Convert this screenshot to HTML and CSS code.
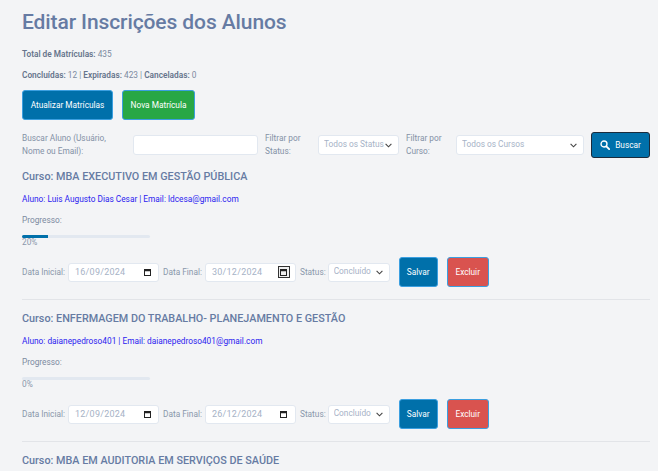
FILE: index.html
```html
<!DOCTYPE html>
<html lang="pt-BR">
<head>
<meta charset="utf-8">
<title>Editar Inscrições dos Alunos</title>
<link rel="stylesheet" href="styles.css">
</head>
<body>
<main class="page">
  <h1 class="title">Editar Inscrições dos Alunos</h1>
  <p class="stat"><strong>Total de Matrículas:</strong> 435</p>
  <p class="stat"><strong>Concluídas:</strong> 12 | <strong>Expiradas:</strong> 423 | <strong>Canceladas:</strong> 0</p>
  <div class="actions">
    <button class="btn btn-blue btn-update" type="button">Atualizar Matrículas</button>
    <button class="btn btn-green btn-new" type="button">Nova Matrícula</button>
  </div>
  <form class="filters">
    <label class="filter-label label-search">Buscar Aluno (Usuário, Nome ou Email):</label>
    <input class="field search" type="text">
    <label class="filter-label label-status">Filtrar por Status:</label>
    <select class="field select status-filter"><option>Todos os Status</option></select>
    <label class="filter-label label-course">Filtrar por Curso:</label>
    <select class="field select course-filter"><option>Todos os Cursos</option></select>
    <button class="btn btn-search" type="button">
      <svg class="search-icon" viewBox="0 0 12 12" width="10" height="10" aria-hidden="true"><circle cx="4.8" cy="4.8" r="3.6" fill="none" stroke="#fff" stroke-width="1.6"/><path d="M7.6 7.6 11 11" stroke="#fff" stroke-width="2.2" stroke-linecap="round"/></svg>
      Buscar
    </button>
  </form>

  <section class="enroll">
    <h2 class="course">Curso: MBA EXECUTIVO EM GESTÃO PÚBLICA</h2>
    <p class="student">Aluno: Luis Augusto Dias Cesar | Email: ldcesa@gmail.com</p>
    <p class="progress-label">Progresso:</p>
    <div class="bar"><div class="fill" style="width:20%"></div></div>
    <div class="pct">20%</div>
    <div class="row">
      <label class="row-label">Data Inicial:</label>
      <span class="field date"><input class="date-text" type="text" value="16/09/2024"><span class="cal"><svg viewBox="0 0 7 7" width="7" height="7" aria-hidden="true"><path d="M0 0H7V7H0ZM1 2.2V6H6V2.2Z" fill="#222" fill-rule="evenodd"/></svg></span></span>
      <label class="row-label">Data Final:</label>
      <span class="field date"><input class="date-text" type="text" value="30/12/2024"><span class="cal cal-hover"><svg viewBox="0 0 7 7" width="7" height="7" aria-hidden="true"><path d="M0 0H7V7H0ZM1 2.2V6H6V2.2Z" fill="#222" fill-rule="evenodd"/></svg></span></span>
      <label class="row-label">Status:</label>
      <select class="field select status"><option>Concluído</option></select>
      <button class="btn btn-blue btn-save" type="button">Salvar</button>
      <button class="btn btn-red" type="button">Excluir</button>
    </div>
  </section>

  <section class="enroll">
    <h2 class="course">Curso: ENFERMAGEM DO TRABALHO- PLANEJAMENTO E GESTÃO</h2>
    <p class="student">Aluno: daianepedroso401 | Email: daianepedroso401@gmail.com</p>
    <p class="progress-label">Progresso:</p>
    <div class="bar"><div class="fill" style="width:0%"></div></div>
    <div class="pct">0%</div>
    <div class="row">
      <label class="row-label">Data Inicial:</label>
      <span class="field date"><input class="date-text" type="text" value="12/09/2024"><span class="cal"><svg viewBox="0 0 7 7" width="7" height="7" aria-hidden="true"><path d="M0 0H7V7H0ZM1 2.2V6H6V2.2Z" fill="#222" fill-rule="evenodd"/></svg></span></span>
      <label class="row-label">Data Final:</label>
      <span class="field date"><input class="date-text" type="text" value="26/12/2024"><span class="cal"><svg viewBox="0 0 7 7" width="7" height="7" aria-hidden="true"><path d="M0 0H7V7H0ZM1 2.2V6H6V2.2Z" fill="#222" fill-rule="evenodd"/></svg></span></span>
      <label class="row-label">Status:</label>
      <select class="field select status"><option>Concluído</option></select>
      <button class="btn btn-blue btn-save" type="button">Salvar</button>
      <button class="btn btn-red" type="button">Excluir</button>
    </div>
  </section>

  <section class="enroll">
    <h2 class="course">Curso: MBA EM AUDITORIA EM SERVIÇOS DE SAÚDE</h2>
  </section>
</main>
</body>
</html>
```

FILE: styles.css
```css
* { box-sizing: border-box; }
html, body { margin: 0; height: 100%; overflow: hidden; }
body {
  background: #f3f4f6;
  font-family: Roboto, "Liberation Sans", sans-serif;
  font-size: 8.3px;
  color: #8492a6;
}
.page { padding: 8px 8px 0 22px; }
.title {
  margin: 0;
  font-size: 21px;
  line-height: 28px;
  font-weight: 500;
  letter-spacing: -.1px;
  color: #667ba3;
}
.stat { margin: 11px 0 0; line-height: 10px; color: #7c8aa0; }
.title + .stat { margin-top: 13px; }
.stat strong { font-weight: 600; color: #66748c; }
.actions { display: flex; gap: 9px; margin-top: 10px; }
.btn {
  border-radius: 3px;
  border: 1px solid #3b9fe0;
  color: #fff;
  font: 400 8.3px Roboto, sans-serif;
  padding: 0;
}
.btn-blue { background: #0070aa; }
.btn-green { background: #28a745; }
.btn-red { background: #d9534f; width: 42px; height: 30px; margin-left: 9px; }
.btn-update { width: 91px; height: 30px; }
.btn-new { width: 73px; height: 30px; }
.filters {
  display: flex;
  align-items: center;
  margin-top: 12px;
  height: 26px;
}
.filter-label { line-height: 13px; color: #8492a6; }
.label-search { width: 111px; padding-right: 20px; }
.label-status { width: 53px; margin-left: 7px; }
.label-course { width: 50px; margin-left: 7px; }
.field {
  background: #fff;
  border: 1px solid #e2e8f0;
  border-radius: 3px;
  font: 400 8.3px Roboto, sans-serif;
  color: #a6b2c6;
}
.search { width: 125px; height: 20px; }
.select {
  appearance: none;
  padding: 0 14px 2px 5px;
  background: #fff url("data:image/svg+xml,%3Csvg xmlns='http://www.w3.org/2000/svg' width='7' height='5' viewBox='0 0 7 5'%3E%3Cpath d='M.6.8 3.5 3.8 6.4.8' fill='none' stroke='%23444' stroke-width='1.1'/%3E%3C/svg%3E") no-repeat right 6px center;
}
.status-filter { width: 81px; height: 20px; }
.course-filter { width: 128px; height: 20px; }
.btn-search {
  display: flex;
  align-items: center;
  justify-content: center;
  gap: 5px;
  width: 59px;
  height: 26px;
  margin-left: 7px;
  background: #0070aa;
  border-color: #1a2b3c;
}
.course {
  margin: 0;
  font-size: 10.8px;
  line-height: 14px;
  font-weight: 500;
  color: #667ba3;
}
.enroll { padding: 12px 0 12px; border-bottom: 1px solid #e2e4e8; }
.enroll:last-of-type { border-bottom: 0; }
.student { margin: 10px 0 0; line-height: 10px; color: #2b22f0; }
.progress-label { margin: 11px 0 0; line-height: 10px; color: #7c8aa0; }
.bar { width: 128px; height: 3px; margin-top: 10px; background: #e2e8f0; border-radius: 2px; overflow: hidden; }
.fill { height: 100%; background: #0070aa; }
.pct { line-height: 9px; color: #8a97ab; }
.row { display: flex; align-items: center; margin-top: 10px; height: 30px; }
.row-label { color: #8a97ab; margin-right: 3px; }
.date {
  display: flex;
  align-items: center;
  width: 91px;
  height: 19px;
  padding: 0 6px;
  margin-right: 4px;
}
.date-text {
  flex: 1;
  min-width: 0;
  padding: 0;
  border: 0;
  background: transparent;
  font: 400 9px Roboto, sans-serif;
  letter-spacing: .25px;
  color: #a6b2c6;
}
.cal { display: flex; align-items: center; justify-content: center; width: 12px; height: 12px; margin-right: -1px; }
.cal-hover { border: 1px solid #333; background: #f0f0f0; }
.status { width: 62px; height: 19px; margin-left: -1px; }
.btn-save { width: 39px; height: 30px; margin-left: 9px; }
```
